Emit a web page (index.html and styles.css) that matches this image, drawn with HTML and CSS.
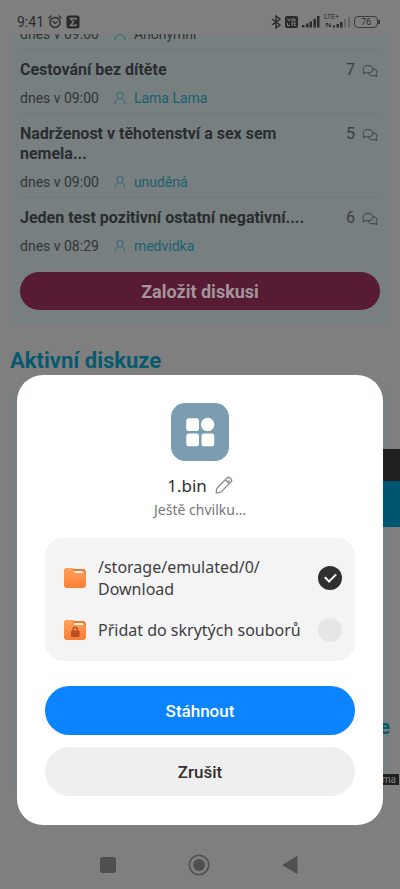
FILE: index.html
```html
<!DOCTYPE html>
<html lang="cs">
<head>
<meta charset="utf-8">
<meta name="viewport" content="width=device-width, initial-scale=1">
<title>Diskuze</title>
<link rel="stylesheet" href="styles.css">
</head>
<body>
<svg class="defs" width="0" height="0" aria-hidden="true">
  <symbol id="user" viewBox="0 0 12 14"><path d="M6 1.200a3.200 3.200 0 0 1 3.200 3.200C9.200 6.500 7.800 8 6 8S2.800 6.500 2.800 4.400A3.200 3.200 0 0 1 6 1.200zM1 13c.2-3 1.500-4.500 3.300-5.300M11 13c-.2-3-1.500-4.500-3.300-5.300" fill="none" stroke="currentColor"/></symbol>
  <symbol id="chat" viewBox="0 0 16 14"><path d="M6 1.500c3 0 5 1.600 5 3.700S9 9 6 9c-.8 0-1.500-.1-2.200-.4L1 9.500l.9-2.200C1.300 6.700 1 6 1 5.200c0-2.100 2-3.700 5-3.700zM11 4.800c2.500.1 4 1.500 4 3.400 0 .8-.3 1.500-.8 2l.8 2.300-2.600-.9c-2.600.8-5.400-.1-6.200-2.500" fill="none" stroke="currentColor" stroke-linejoin="round"/></symbol>
</svg>
<div class="screen">
  <header class="status">
    <span class="clock">9:41</span>
    <svg width="14" height="14" viewBox="0 0 14 14"><g fill="none" stroke="currentColor" stroke-width="1.400" stroke-linecap="round"><circle cx="7" cy="7.500" r="5"/><path d="M1 3l2-2M13 3l-2-2M5 6.500l2 1.800 2-1.300"/></g></svg>
    <svg width="14" height="14" viewBox="0 0 14 14"><rect x=".5" y=".5" width="13" height="13" rx="2.500" fill="currentColor"/><path d="M10 5V3.500H4.500L7.500 7l-3 3.500H10V9" fill="none" stroke="#808080" stroke-width="1.400"/></svg>
    <svg class="push" width="10" height="14" viewBox="0 0 10 14"><path d="M1 4l8 6-4 3V1l4 3-8 6" fill="none" stroke="currentColor" stroke-width="1.400"/></svg>
    <svg width="13" height="12" viewBox="0 0 13 12"><rect width="13" height="12" rx="2" fill="currentColor"/><path d="M2.500 2.500L4 5l1.500-2.500M7 3h3v2H7zM2.500 7v2.500H5M6 7h2.500M7.200 7v3M11 7H9.500v2.500H11" fill="none" stroke="#808080"/></svg>
    <svg width="18" height="12" viewBox="0 0 18 12" fill="currentColor"><path d="M0 9h2.500v2.500H0zM4 7.500h2.500v4H4zM7.500 5.500H10v6H7.500zM11.500 3H14v8.500h-2.500zM15 0h2.500v11.500H15z"/></svg>
    <span class="lte"><small>LTE+</small><svg width="26" height="12" viewBox="0 0 26 12" fill="currentColor"><path d="M3 7v4M1.500 8.500L3 7l1.500 1.500M6 7v4M4.500 9.500L6 11l1.500-1.500" stroke="currentColor" fill="none"/><path d="M9 9.500h2v2H9zM12.500 8h2.500v3.500h-2.500zM16 6h2.500v5.500H16z"/><path opacity=".3" d="M20 3h2v8.500h-2zM24 1h2v10.500h-2z"/></svg></span>
    <span class="battery">76</span>
  </header>

  <main class="page">
    <section class="panel">
      <ul class="topics">
        <li class="topic topic-cut"><div class="meta"><time>dnes v 09:00</time><svg class="user"><use href="#user"/></svg><span>Anonymní</span></div></li>
        <li class="topic">
          <div class="head"><h3>Cestování bez dítěte</h3><span class="count">7<svg class="chat"><use href="#chat"/></svg></span></div>
          <div class="meta"><time>dnes v 09:00</time><svg class="user"><use href="#user"/></svg><a href="#">Lama Lama</a></div>
        </li>
        <li class="topic">
          <div class="head"><h3>Nadrženost v těhotenství a sex sem nemela...</h3><span class="count">5<svg class="chat"><use href="#chat"/></svg></span></div>
          <div class="meta"><time>dnes v 09:00</time><svg class="user"><use href="#user"/></svg><a href="#">unuděná</a></div>
        </li>
        <li class="topic">
          <div class="head"><h3>Jeden test pozitivní ostatní negativní....</h3><span class="count">6<svg class="chat"><use href="#chat"/></svg></span></div>
          <div class="meta"><time>dnes v 08:29</time><svg class="user"><use href="#user"/></svg><a href="#">medvidka</a></div>
        </li>
      </ul>
      <button class="create" type="button">Založit diskusi</button>
    </section>
    <h2>Aktivní diskuze</h2>
    <section class="panel panel-active"><span class="more">e</span></section>
    <aside class="side"></aside>
    <small class="ad">ma</small>
  </main>

  <footer class="nav">
    <button type="button" aria-label="Přehled"><svg width="16" height="16"><rect width="16" height="16" rx="2.500" fill="currentColor"/></svg></button>
    <button type="button" aria-label="Domů"><svg width="22" height="22"><circle cx="11" cy="11" r="9.700" fill="none" stroke="currentColor" stroke-width="1.600"/><circle cx="11" cy="11" r="6" fill="currentColor"/></svg></button>
    <button type="button" aria-label="Zpět"><svg width="16" height="18"><path d="M1 9L15 .5v17z" fill="currentColor" stroke="currentColor" stroke-linejoin="round"/></svg></button>
  </footer>

  <div class="overlay">
    <form class="dialog" role="dialog" aria-labelledby="file">
      <svg class="app" viewBox="0 0 57 57"><rect width="57" height="57" rx="14" fill="#7c9caf"/><g fill="#fff"><rect x="15" y="15" width="12.500" height="12.500" rx="2.500"/><circle cx="36" cy="21.200" r="6.600"/><rect x="15" y="30" width="12.500" height="12.500" rx="2.500"/><rect x="30" y="30" width="12.500" height="12.500" rx="2.500"/></g></svg>
      <div class="name"><span id="file">1.bin</span><button type="button" aria-label="Přejmenovat"><svg width="18" height="18" viewBox="0 0 18 18"><path d="M1.200 16.800l.4-3.600q.1-.8.800-1.500L12 2c1-1 2-1 3 0l1 1c1 1 1 2 0 3L6.300 15.600q-.7.700-1.500.8zM10.300 3.700l4 4M12.800 6.200l1.700-1.700" fill="none" stroke="#8c8c8c" stroke-width="1.300" stroke-linejoin="round"/></svg></button></div>
      <p class="wait">Ještě chvilku…</p>
      <div class="options">
        <label class="option">
          <svg class="folder" viewBox="0 0 24 22"><defs><linearGradient id="g" x2="0" y2="1"><stop stop-color="#ffa35d"/><stop offset="1" stop-color="#fa7d35"/></linearGradient></defs><path d="M1 4.500C1 2.300 2 1 4.200 1h3.500C9.500 1 10 2 12 2h7.500C22 2 23 3.500 23 6v10.500c0 3-1.200 4.500-4 4.500H5c-2.800 0-4-1.500-4-4.500z" fill="#ee7932"/><path d="M11 4h8q2 0 2 2.500H11z" fill="#fff3e5"/><path d="M1 4.500C1 2.300 2 1 4.200 1h3.500c2.600 0 2.300 5 5 5H20c2.200 0 3 1 3 3v7.500c0 3-1.200 4.500-4 4.500H5c-2.800 0-4-1.500-4-4.500z" fill="url(#g)"/></svg>
          <span>/storage/emulated/0/<wbr>Download</span>
          <input type="checkbox" checked>
        </label>
        <label class="option">
          <svg class="folder" viewBox="0 0 24 22"><path d="M1 4.500C1 2.300 2 1 4.200 1h3.500C9.500 1 10 2 12 2h7.500C22 2 23 3.500 23 6v10.500c0 3-1.200 4.500-4 4.500H5c-2.800 0-4-1.500-4-4.500z" fill="#ee7932"/><path d="M11 4h8q2 0 2 2.500H11z" fill="#fff3e5"/><path d="M1 4.500C1 2.300 2 1 4.200 1h3.500c2.600 0 2.300 5 5 5H20c2.200 0 3 1 3 3v7.500c0 3-1.200 4.500-4 4.500H5c-2.800 0-4-1.500-4-4.500z" fill="url(#g)"/><rect x="8" y="11.500" width="8.500" height="6.500" rx="1" fill="#b65020"/><path d="M10 12v-1.500a2.200 2.200 0 0 1 4.500 0V12" fill="none" stroke="#b65020" stroke-width="1.300"/></svg>
          <span>Přidat do skrytých souborů</span>
          <input type="checkbox">
        </label>
      </div>
      <button class="action primary" type="button">Stáhnout</button>
      <button class="action" type="button">Zrušit</button>
    </form>
  </div>
</div>
</body>
</html>
```
FILE: styles.css
```css
* { box-sizing: border-box; }
body, h2, h3, p, ul { margin: 0; }
body { font-family: Roboto, sans-serif; background: #7f7f7f; color: #292d30; }
ul { padding: 0; list-style: none; }
button { border: 0; padding: 0; background: none; font: inherit; color: inherit; }
svg { display: block; flex: none; }
.defs { position: absolute; }

.screen { position: relative; min-height: 100vh; display: flex; flex-direction: column; overflow: hidden; }

.status { display: flex; align-items: center; gap: 4px; height: 34px; padding: 10px 22px 0 17px; color: #2b2b2b; }
.clock { font-size: 14px; line-height: 14px; }
.push { margin-left: auto; }
.lte { position: relative; }
.lte small { position: absolute; top: -3px; left: 0; font-size: 7px; line-height: 8px; }
.battery { position: relative; width: 24px; height: 12px; border: 1px solid #3b3b3b; border-radius: 4px; font-size: 9px; line-height: 10px; text-align: center; }
.battery::after { content: ""; position: absolute; right: -3px; top: 3px; width: 2px; height: 4px; background: #3b3b3b; }

.page { position: relative; flex: 1; display: flex; flex-direction: column; padding: 0 10px; overflow: hidden; }
.panel { padding: 0 10px 16px; background: #787f80; border-radius: 0 0 8px 8px; }
.topics { margin-top: -10px; }
.topic { padding: 10px 0 5px; border-bottom: 1px solid #6d797b; }
.topic:last-child { border-bottom: 0; }
.topic-cut { padding-top: 0; }
.head { display: flex; justify-content: space-between; gap: 20px; margin-bottom: 8px; }
h3 { font-size: 16px; line-height: 20px; font-weight: 700; max-width: 296px; }
.count { display: flex; align-items: center; gap: 7px; height: 20px; padding-right: 2px; font-size: 16px; line-height: 20px; color: #3b4042; }
.chat { width: 16px; height: 14px; margin-top: 2px; }
.meta { display: flex; align-items: center; height: 20px; font-size: 14px; color: #303537; }
.meta a { color: #19616f; text-decoration: none; }
.user { width: 12px; height: 14px; margin: 0 8px 0 15px; color: #2c6976; }
.create { display: block; width: 100%; height: 38px; margin-top: 11px; border-radius: 19px; background: #571c34; color: #a5949b; font-size: 18px; font-weight: 700; }
h2 { margin-top: 21px; font-size: 22px; line-height: 28px; font-weight: 700; color: #075a6d; }
.panel-active { flex: 1; margin: 15px 0 54px; padding: 0; display: flex; align-items: flex-end; justify-content: flex-end; border-radius: 8px 8px 0 0; }
.more { margin-bottom: 48px; font-size: 20px; font-weight: 700; line-height: 24px; color: #075a6d; }
.side { position: absolute; right: 0; top: 415px; width: 40px; height: 78px; border-top: 32px solid #202020; background: #005570; }
.ad { position: absolute; right: 1px; top: 740px; padding: 0 3px; background: #202020; color: #868686; font-size: 10px; line-height: 11px; }

.nav { display: flex; align-items: center; justify-content: center; gap: 72px; height: 48px; padding-right: 3px; color: #505050; }

.overlay { position: absolute; inset: 0; display: flex; flex-direction: column; justify-content: flex-end; padding: 0 17px 64px; }
.dialog { display: flex; flex-direction: column; align-items: center; padding: 28px 28px 29px; border-radius: 26px; background: #fff; color: #303030; font-family: "Noto Sans", sans-serif; }
.app { width: 58px; height: 58px; }
.name { display: flex; align-items: center; gap: 8px; height: 26px; margin-top: 11px; font-size: 17px; }
.wait { margin-top: 2px; font-size: 14px; line-height: 20px; color: #777; }
.options { align-self: stretch; display: flex; flex-direction: column; gap: 18px; margin: 18px 0 25px; padding: 18px 13px 19px 18px; border-radius: 18px; background: #f4f4f4; }
.option { display: flex; align-items: center; min-height: 24px; font-size: 16px; line-height: 22px; color: #404040; }
.option span { flex: 1; }
.folder { width: 24px; height: 22px; margin-right: 11px; }
.option input { appearance: none; flex: none; display: grid; place-items: center; width: 24px; height: 24px; margin: 0; border-radius: 50%; background: #e6e6e6; }
.option input:checked { background: #303030; }
.option input:checked::before { content: ""; width: 9px; height: 5px; margin-bottom: 3px; border: solid #fff; border-width: 0 0 2px 2px; transform: rotate(-45deg); }
.action { align-self: stretch; height: 49px; border-radius: 25px; background: #efefef; font-family: Roboto, sans-serif; font-size: 17px; font-weight: 500; }
.primary { margin-bottom: 12px; background: #0d84ff; color: #fff; }
```
